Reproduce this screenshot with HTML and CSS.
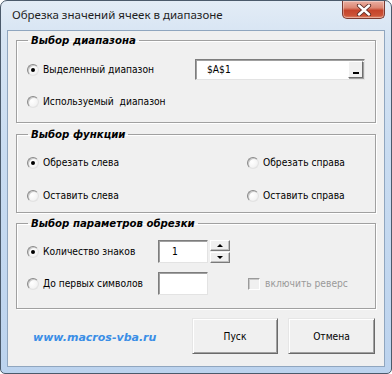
FILE: index.html
```html
<!DOCTYPE html>
<html lang="ru">
<head>
<meta charset="utf-8">
<title>Обрезка значений ячеек в диапазоне</title>
<link rel="stylesheet" href="styles.css">
</head>
<body>
<div class="window">
  <div class="titlebar">
    <span class="title">Обрезка значений ячеек в диапазоне</span>
    <div class="close">
      <svg width="16" height="12" viewBox="0 0 16 12">
        <path d="M3 1.5 L13 10.5 M13 1.5 L3 10.5" stroke="#5a2b26" stroke-width="4.2" stroke-linecap="round"/>
        <path d="M3 1.5 L13 10.5 M13 1.5 L3 10.5" stroke="#ffffff" stroke-width="2.4" stroke-linecap="round"/>
      </svg>
    </div>
  </div>
  <div class="client">
    <fieldset class="group g1">
      <legend>Выбор диапазона</legend>
      <div class="row r21">
        <label class="opt w168"><span class="radio on"></span>Выделенный диапазон</label>
        <div class="refedit"><span class="reftext">$A$1</span><span class="refbtn"><span class="bar"></span></span></div>
      </div>
      <div class="row r21 mt11">
        <label class="opt"><span class="radio"></span>Используемый&nbsp; диапазон</label>
      </div>
    </fieldset>

    <fieldset class="group g2">
      <legend>Выбор функции</legend>
      <div class="grid2">
        <label class="opt"><span class="radio on"></span>Обрезать слева</label>
        <label class="opt"><span class="radio"></span>Обрезать справа</label>
        <label class="opt"><span class="radio"></span>Оставить слева</label>
        <label class="opt"><span class="radio"></span>Оставить справа</label>
      </div>
    </fieldset>

    <fieldset class="group g3">
      <legend>Выбор параметров обрезки</legend>
      <div class="row r23">
        <label class="opt w131"><span class="radio on"></span>Количество знаков</label>
        <div class="textbox"><span class="val">1</span></div>
        <div class="spin">
          <span class="sbtn"><span class="tri up"></span></span>
          <span class="sbtn"><span class="tri down"></span></span>
        </div>
      </div>
      <div class="row r23 mt9">
        <label class="opt w131"><span class="radio"></span>До первых символов</label>
        <div class="textbox"></div>
        <label class="chk"><span class="box"></span>включить реверс</label>
      </div>
    </fieldset>

    <div class="footer">
      <span class="link">www.macros-vba.ru</span>
      <button class="btn">Пуск</button>
      <button class="btn">Отмена</button>
    </div>
  </div>
</div>
</body>
</html>
```

FILE: styles.css
```css
html, body {
  margin: 0;
  padding: 0;
  background: #ffffff;
}
.window {
  box-sizing: border-box;
  width: 392px;
  height: 374px;
  border: 1px solid #4b5a6b;
  border-radius: 7px 7px 5px 5px;
  background: linear-gradient(180deg, #e3ecf6 0%, #d6e4f3 10%, #c9dcf1 40%, #bcd3ee 100%);
  padding: 0 6px 6px 6px;
  display: flex;
  flex-direction: column;
  font-family: "DejaVu Sans Condensed", "DejaVu Sans", Verdana, sans-serif;
  font-size: 10.2px;
  color: #000;
}
.titlebar {
  height: 29px;
  display: flex;
  align-items: flex-start;
  flex: none;
}
.title {
  font-family: "Noto Sans", "Open Sans", sans-serif;
  font-size: 11.5px;
  color: #1e1e1e;
  margin-left: 5px;
  line-height: 28px;
}
.close {
  margin-left: auto;
  margin-right: 0;
  width: 43px;
  height: 18px;
  box-sizing: border-box;
  border: 1px solid #7a3a31;
  border-top: none;
  border-radius: 0 0 5px 5px;
  background: linear-gradient(180deg, #eab0a3 0%, #dc8773 40%, #c5442b 55%, #cc5337 85%, #e08a6e 100%);
  display: flex;
  align-items: center;
  justify-content: center;
  box-shadow: inset 0 0 0 1px rgba(255,255,255,0.35);
}
.client {
  flex: 1;
  box-sizing: border-box;
  border: 1px solid #90a6bf;
  background: #f0f0f0;
  padding: 0 8px;
  display: flex;
  flex-direction: column;
}
.group {
  margin: 0;
  padding: 0 10px;
  min-width: 0;
  border: 1px solid #a0a0a0;
  box-shadow: inset 1px 1px 0 #ffffff, 1px 1px 0 #ffffff;
}
.group legend {
  margin-left: 1px;
  padding: 0 3px;
  font-family: "DejaVu Sans", Verdana, sans-serif;
  font-weight: bold;
  font-style: italic;
  font-size: 10.2px;
  line-height: 13px;
  color: #000;
}
.g1 { margin-top: 3px; padding-top: 12px; padding-bottom: 10px; }
.g2 { margin-top: 5px; padding-top: 11px; padding-bottom: 6px; }
.g3 { margin-top: 4px; padding-top: 10px; padding-bottom: 13px; }

.row {
  display: flex;
  align-items: center;
}
.r21 { height: 21px; }
.r23 { height: 23px; }
.mt11 { margin-top: 11px; }
.mt9 { margin-top: 9px; }
.w168 { width: 168px; flex: none; }
.w131 { width: 131px; flex: none; }

.opt {
  display: flex;
  align-items: center;
  white-space: nowrap;
  height: 21px;
}
.radio {
  box-sizing: border-box;
  width: 12px;
  height: 12px;
  border-radius: 50%;
  border: 1px solid;
  border-color: #8a8a8a #e2e2e2 #e2e2e2 #8a8a8a;
  background: radial-gradient(circle at 40% 40%, #ffffff 0%, #f4f4f4 60%, #dcdcdc 100%);
  box-shadow: inset 1px 1px 0 #c8c8c8;
  margin-right: 4px;
  display: flex;
  align-items: center;
  justify-content: center;
  flex: none;
}
.radio.on::after {
  content: "";
  width: 4px;
  height: 4px;
  border-radius: 50%;
  background: #000;
}

.refedit {
  box-sizing: border-box;
  width: 170px;
  height: 21px;
  border: 1px solid;
  border-color: #7d7d7d #e3e3e3 #e3e3e3 #7d7d7d;
  box-shadow: inset 1px 1px 0 #a0a0a0;
  background: #ffffff;
  display: flex;
  align-items: center;
  padding-left: 11px;
}
.reftext { flex: 1; }
.refbtn {
  box-sizing: border-box;
  width: 15px;
  height: 17px;
  margin-right: 1px;
  background: #f0f0f0;
  border: 1px solid;
  border-color: #ffffff #6e6e6e #6e6e6e #ffffff;
  box-shadow: 1px 1px 0 #a0a0a0;
  display: flex;
  align-items: flex-end;
  justify-content: center;
  padding-bottom: 3px;
}
.refbtn .bar {
  width: 6px;
  height: 2px;
  background: #000;
}

.grid2 {
  display: grid;
  grid-template-columns: 220px 1fr;
  grid-auto-rows: 21px;
  row-gap: 12px;
}

.textbox {
  box-sizing: border-box;
  width: 50px;
  height: 23px;
  border: 1px solid;
  border-color: #7d7d7d #e3e3e3 #e3e3e3 #7d7d7d;
  box-shadow: inset 1px 1px 0 #a0a0a0;
  background: #ffffff;
  display: flex;
  align-items: center;
  padding-left: 13px;
  flex: none;
}
.spin {
  margin-left: 2px;
  display: flex;
  flex-direction: column;
  gap: 1px;
  height: 23px;
}
.sbtn {
  box-sizing: border-box;
  width: 20px;
  height: 11px;
  background: #f0f0f0;
  border: 1px solid;
  border-color: #ffffff #7a7a7a #7a7a7a #ffffff;
  box-shadow: inset -1px -1px 0 #c0c0c0;
  display: flex;
  align-items: center;
  justify-content: center;
}
.tri {
  width: 0;
  height: 0;
  border-left: 3px solid transparent;
  border-right: 3px solid transparent;
}
.tri.up { border-bottom: 3px solid #000; }
.tri.down { border-top: 3px solid #000; }

.chk {
  margin-left: 40px;
  display: flex;
  align-items: center;
  color: #9a9a9a;
  white-space: nowrap;
}
.chk .box {
  box-sizing: border-box;
  width: 12px;
  height: 12px;
  border: 1px solid;
  border-color: #9a9a9a #ffffff #ffffff #9a9a9a;
  box-shadow: inset 1px 1px 0 #c8c8c8;
  background: #f0f0f0;
  margin-right: 5px;
}

.footer {
  margin-top: 9px;
  display: flex;
  align-items: center;
  height: 36px;
}
.link {
  margin-left: 17px;
  flex: 1;
  font-family: "DejaVu Sans", Verdana, sans-serif;
  font-weight: bold;
  font-style: italic;
  font-size: 11px;
  color: #3a8ee6;
  margin-top: 3px;
}
.btn {
  box-sizing: border-box;
  width: 86px;
  height: 36px;
  margin-left: 10px;
  font-family: "DejaVu Sans Condensed", "DejaVu Sans", Verdana, sans-serif;
  font-size: 10.2px;
  color: #000;
  background: #f0f0f0;
  border: 1px solid;
  border-color: #e6e6e6 #6a6a6a #6a6a6a #e6e6e6;
  box-shadow: inset 1px 1px 0 #ffffff, inset -1px -1px 0 #a0a0a0;
  padding: 0;
}
.btn + .btn { width: 87px; margin-right: 1px; }
```
